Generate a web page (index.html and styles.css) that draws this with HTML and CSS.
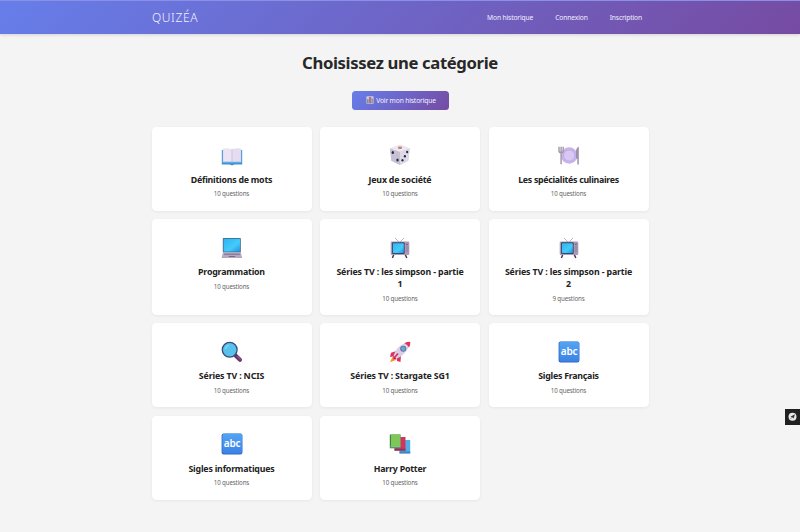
FILE: index.html
```html
<!DOCTYPE html>
<html lang="fr">
<head>
<meta charset="utf-8">
<title>Quizéa</title>
<link rel="stylesheet" href="styles.css">
</head>
<body>
<svg class="defs" aria-hidden="true">
  <defs>
    <linearGradient id="screen" x1="0" y1="0" x2="1" y2="1"><stop offset="0" stop-color="#2db4f4"/><stop offset=".6" stop-color="#42cbfa"/><stop offset="1" stop-color="#2396e4"/></linearGradient>
    <linearGradient id="tile" x1="0" y1="0" x2="0" y2="1"><stop offset="0" stop-color="#53a4f4"/><stop offset="1" stop-color="#3b83e6"/></linearGradient>
  </defs>
  <symbol id="tv" viewBox="0 0 22 22">
    <path d="M6 1l4 4M15 1l-4 4" stroke="#a9a3ae" stroke-width=".8" fill="none"/>
    <path d="M5 17l-1.600 4M16 17l1.800 4" stroke="#54324f" stroke-width="1.500"/>
    <rect x="1.700" y="4.500" width="18.600" height="13.500" rx="1.200" fill="#ab9bb5"/>
    <rect x="3" y="5.300" width="12.700" height="11.700" rx="1" fill="#3f4568"/>
    <rect x="3.900" y="6.200" width="10.900" height="9.900" rx=".8" fill="url(#screen)"/>
    <path d="M17 10h2.300M17 12h2.300M17 14h2.300" stroke="#80708d" stroke-width=".7"/>
    <circle cx="18" cy="7.300" r=".9" fill="#705c80"/>
  </symbol>
</svg>

<header class="header">
  <div class="header-inner">
    <a class="logo">QUIZÉA</a>
    <nav class="nav"><a>Mon historique</a><a>Connexion</a><a>Inscription</a></nav>
  </div>
</header>

<main class="main">
  <h1 class="heading">Choisissez une catégorie</h1>
  <a class="button">
    <svg class="chart" viewBox="0 0 8 8"><rect x=".4" y=".3" width="7.200" height="7.400" rx=".5" fill="#d0c7d9"/><rect x="1" y="3.200" width="1.600" height="4" fill="#6d9b80"/><rect x="3.200" y="1" width="1.600" height="6.200" fill="#a65c7f"/><rect x="5.400" y="2.400" width="1.500" height="4.800" fill="#8b8ca8"/></svg>
    <span>Voir mon historique</span>
  </a>
  <div class="grid">
    <article class="card">
      <svg class="icon" viewBox="0 0 22 22"><path d="M.8 6h20.400v14.500H13l-1 .8h-2l-1-.8H.8z" fill="#3f92d4"/><path d="M1.800 5.200h18.400v13H1.800z" fill="#ded5ed"/><path d="M2.400 4.600Q7 3.900 11 5.300v12.500Q7 16.800 2.400 17.400z" fill="#ece3f5"/><path d="M19.600 4.600Q15 3.900 11 5.300v12.500q4-1 8.600-.4z" fill="#e6dcf1"/><path d="M11 5.300v13" stroke="#c5b8d8" stroke-width=".7"/><path d="M1.500 18.200h19" stroke="#66b6ec" stroke-width=".8"/></svg>
      <h2 class="title t-tight">Définitions de mots</h2><p class="count">10 questions</p>
    </article>
    <article class="card">
      <svg class="icon" viewBox="0 0 22 22"><path d="M11 .8l9.800 3.700-1.600 12.300L11 21 2.400 16.800 1 4.500z" fill="#d2cbdc"/><path d="M11 .8l9.800 3.700L11 8 1 4.500z" fill="#eee8f2"/><path d="M1 4.500L11 8v13l-8.600-4.200z" fill="#c8c1d3"/><path d="M11 8l9.800-3.500-1.600 12.300L11 21z" fill="#dfd8e7"/><ellipse cx="11" cy="3.700" rx="2.200" ry="1.200" fill="#c78070"/><g fill="#292847"><ellipse cx="3.800" cy="8.500" rx="1.200" ry="1.500"/><ellipse cx="8.500" cy="15.900" rx="1.200" ry="1.500"/><ellipse cx="18.200" cy="8" rx="1.100" ry="1.300"/><ellipse cx="15.900" cy="12.200" rx="1.100" ry="1.300"/><ellipse cx="13.500" cy="16.300" rx="1.100" ry="1.300"/></g></svg>
      <h2 class="title">Jeux de société</h2><p class="count">10 questions</p>
    </article>
    <article class="card">
      <svg class="icon" viewBox="0 0 22 22"><circle cx="11.200" cy="11.500" r="8.300" fill="#c8b4ed"/><circle cx="11.200" cy="11.500" r="5.600" fill="#d8c8f3" stroke="#b8a2df" stroke-width=".7"/><path d="M1 2.800v4q0 1.900 2.100 1.900T5.200 6.800v-4M3.100 2.800v17.500" fill="none" stroke="#9f97a6" stroke-width="1.400"/><path d="M20.800 2.500v18h-1.500v-6H18v-8q.4-3 2.800-4z" fill="#9c92a8"/></svg>
      <h2 class="title t-food">Les spécialités culinaires</h2><p class="count">10 questions</p>
    </article>
    <article class="card">
      <svg class="icon" viewBox="0 0 22 22"><rect x="1.800" y="1" width="18" height="14.500" rx=".8" fill="#456586"/><rect x="2.600" y="1.800" width="16.400" height="12.800" fill="url(#screen)"/><path d="M2 15.300h17.800l1.400 5.800H.6z" fill="#b4a8c4"/><path d="M3.300 16.400h15.300l.4 1.700H2.900z" fill="#8c819b"/><path d="M8 19h6l.3 1H7.700z" fill="#786a88"/></svg>
      <h2 class="title">Programmation</h2><p class="count">10 questions</p>
    </article>
    <article class="card">
      <svg class="icon"><use href="#tv"/></svg>
      <h2 class="title t-series">Séries TV : les simpson - partie<br>1</h2><p class="count">10 questions</p>
    </article>
    <article class="card">
      <svg class="icon"><use href="#tv"/></svg>
      <h2 class="title t-series">Séries TV : les simpson - partie<br>2</h2><p class="count">9 questions</p>
    </article>
    <article class="card">
      <svg class="icon" viewBox="0 0 22 22"><path d="M14.500 14.500l4.500 4.300" stroke="#673666" stroke-width="4" stroke-linecap="round"/><path d="M16.500 15.500l2.800 2.700" stroke="#93518f" stroke-width="1.500" stroke-linecap="round"/><circle cx="8.700" cy="8.700" r="7.400" fill="#57c3ed" stroke="#3d4b7c" stroke-width="1.300"/><path d="M4.500 8q.5-3 3.500-4" stroke="#91e4fb" stroke-width="1" fill="none"/></svg>
      <h2 class="title t-series">Séries TV : NCIS</h2><p class="count">10 questions</p>
    </article>
    <article class="card">
      <svg class="icon" viewBox="0 0 22 22"><path d="M4 15l-3 6.300 6.500-2.600z" fill="#f68b3b"/><path d="M7.500 10L2 11.700 1 16l5-1zM12 14l-.5 7-3.400-1-.5-3.200z" fill="#db315e"/><path d="M4.500 14.500Q8 5 16 2l4.300-.8L19.800 6Q16 14 7.500 17.800z" fill="#d7cfe5"/><path d="M15.500 2.200Q19 .3 21.300 1q.3 2.700-1.300 5.400Q18.500 3.600 15.500 2.200z" fill="#e33260"/><path d="M4.500 14.500l3 3.300-3 .4z" fill="#a52c5c"/><path d="M9 12.500l-3.500 4" stroke="#dd2d61" stroke-width="1.600"/><circle cx="14.200" cy="7.800" r="2.500" fill="#63a8dc" stroke="#68759c" stroke-width="1.100"/></svg>
      <h2 class="title t-series">Séries TV : Stargate SG1</h2><p class="count">10 questions</p>
    </article>
    <article class="card">
      <svg class="icon" viewBox="0 0 22 22"><rect x=".6" y=".6" width="20.800" height="20.800" rx="2" fill="#3268bf"/><rect x="1.400" y=".8" width="19.800" height="19.600" rx="1.600" fill="url(#tile)"/><text x="11" y="14.300" text-anchor="middle" class="abc-text">abc</text></svg>
      <h2 class="title t-tight">Sigles Français</h2><p class="count">10 questions</p>
    </article>
    <article class="card">
      <svg class="icon" viewBox="0 0 22 22"><rect x=".6" y=".6" width="20.800" height="20.800" rx="2" fill="#3268bf"/><rect x="1.400" y=".8" width="19.800" height="19.600" rx="1.600" fill="url(#tile)"/><text x="11" y="14.300" text-anchor="middle" class="abc-text">abc</text></svg>
      <h2 class="title">Sigles informatiques</h2><p class="count">10 questions</p>
    </article>
    <article class="card">
      <svg class="icon" viewBox="0 0 22 22"><path d="M10.500 7h10.700v13.500H10.500z" fill="#50afe9"/><path d="M10.500 18.400h10.700v2H10.500z" fill="#3b86c6"/><path d="M5.500 4h11v13.500h-11z" fill="#d3345e"/><path d="M5.500 15.700h11v2h-11z" fill="#8e3559"/><path d="M.8 1.500h10.700v13.800H.8z" fill="#3b8449"/><path d="M2 1.500h9.500v11.800H2z" fill="#7ec759"/><path d="M1.500 13.800h10" stroke="#d8e1d4" stroke-width=".7"/></svg>
      <h2 class="title">Harry Potter</h2><p class="count">10 questions</p>
    </article>
  </div>
</main>
<div class="widget"><svg viewBox="0 0 15 16"><circle cx="7.500" cy="7.800" r="4" fill="#e8e8e8"/><path d="M10 5.300L8.600 9.500 7.200 8.300 5.400 7.700z" fill="#333"/><path d="M5.400 10l2-2" stroke="#777" stroke-width=".8"/></svg></div>
</body>
</html>
```

FILE: styles.css
```css
* { box-sizing: border-box; }
body { margin: 0; height: 532px; overflow: hidden; background: #f4f4f4; color: #222; font-family: "Noto Sans", "Open Sans", sans-serif; }
.defs { display: block; width: 0; height: 0; }
.header { height: 33.500px; background: linear-gradient(135deg, #667eea 0%, #764ba2 100%); border-top: 1px solid #8990e5; box-shadow: 0 1px 3px rgba(0, 0, 0, .14); color: #f2efff; }
.header-inner { width: 497px; height: 100%; margin: 0 auto; padding: 1px 6.500px 0 .5px; display: flex; align-items: center; justify-content: space-between; }
.logo { font-size: 12px; font-weight: 300; letter-spacing: .6px; line-height: 16px; }
.nav { display: flex; gap: 22px; font-size: 6.700px; letter-spacing: -.13px; line-height: 10px; white-space: nowrap; padding-top: 1px; }
.main { width: 497px; margin: 0 auto; display: flex; flex-direction: column; align-items: center; }
.heading { margin: 18.400px 0 0; font-size: 16.700px; font-weight: 700; letter-spacing: -.37px; line-height: 22px; white-space: nowrap; color: #282828; }
.button { display: flex; align-items: center; justify-content: center; gap: 2px; width: 97px; height: 19px; margin-top: 16.800px; padding-left: 2px; border-radius: 3.500px; background: linear-gradient(135deg, #667eea, #764ba2); color: #f5f2ff; font-size: 6.700px; letter-spacing: -.14px; white-space: nowrap; }
.chart { width: 8px; height: 8px; }
.grid { width: 100%; margin-top: 17px; display: grid; grid-template-columns: repeat(3, 1fr); grid-template-rows: 84px 95.500px 84px 84px; gap: 8.500px; }
.card { display: flex; flex-direction: column; align-items: center; padding-top: 17.500px; border-radius: 4.500px; background: #fff; box-shadow: 0 1px 3px rgba(0, 0, 0, .06); white-space: nowrap; }
.icon { width: 22px; height: 22px; flex: none; }
.title { margin: 7.800px 0 0; font-size: 8.800px; font-weight: 700; letter-spacing: -.2px; line-height: 12px; text-align: center; color: #222; }
.t-tight { letter-spacing: -.24px; }
.t-food { letter-spacing: -.29px; }
.t-series { letter-spacing: -.14px; }
.count { margin: 3.300px 0 0; font-size: 6.200px; letter-spacing: -.15px; line-height: 10px; color: #666; }
.abc-text { font-size: 10px; font-weight: 600; letter-spacing: -.2px; fill: #fff; }
.widget { position: fixed; right: 0; top: 409px; width: 15px; height: 16px; background: #202020; }
.widget svg { display: block; width: 15px; height: 16px; }
```
